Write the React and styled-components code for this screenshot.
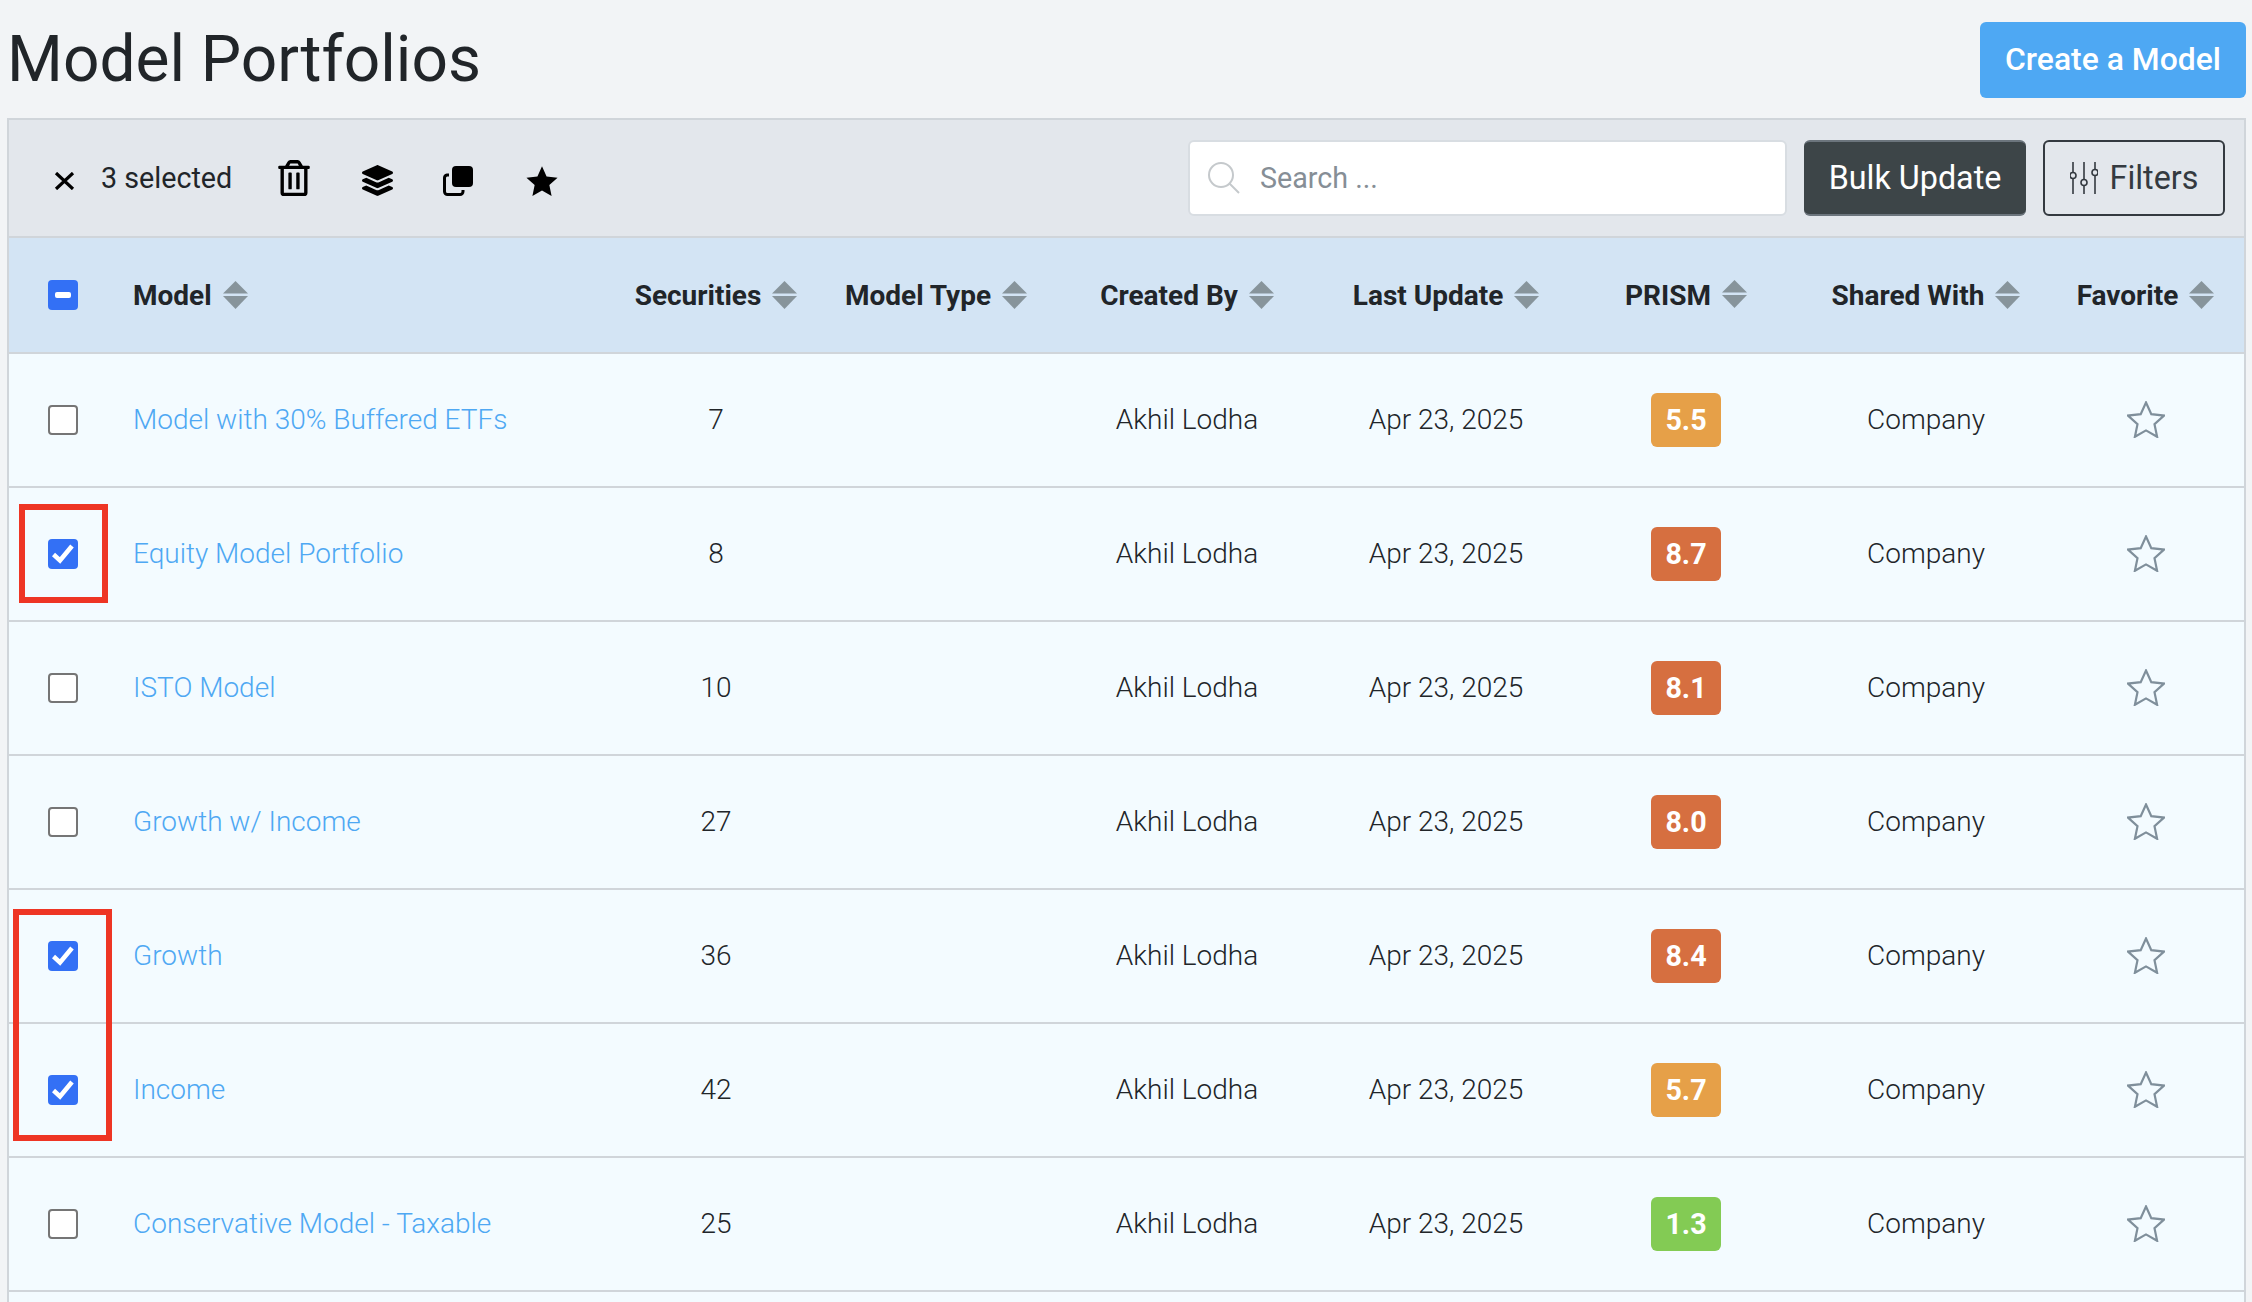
import React from 'react';
import styled, { createGlobalStyle } from 'styled-components';
import { FaRegTrashAlt, FaLayerGroup } from 'react-icons/fa';

const COLUMNS = '107px 493px 214px 226px 276px 242px 238px 242px 197px';
const STAR_POINTS = '19,1.5 24.3,13.2 37,14.6 27.5,23.2 30.1,35.8 19,29.4 7.9,35.8 10.5,23.2 1,14.6 13.7,13.2';

const GlobalStyle = createGlobalStyle`
  html, body {
    margin: 0;
    height: 100%;
    overflow: hidden;
    background: #f2f4f6;
  }
  body {
    font-family: Roboto, "Liberation Sans", sans-serif;
    color: #212529;
  }
`;

const Page = styled.div`
  position: relative;
  width: 2252px;
  height: 1302px;
  overflow: hidden;
  padding: 22px 6px 0 7px;
  box-sizing: border-box;
`;

const PageHeader = styled.header`
  display: flex;
  justify-content: space-between;
  align-items: flex-start;
  height: 96px;
`;

const Title = styled.h1`
  margin: 2px 0 0;
  font-size: 64px;
  font-weight: 400;
  line-height: 72px;
`;

const CreateButton = styled.button`
  width: 266px;
  height: 76px;
  padding: 0 0 2px;
  border: none;
  border-radius: 6px;
  background: #4ea8f3;
  color: #fff;
  font: 500 31.9px Roboto, sans-serif;
`;

const Panel = styled.section`
  border: solid #d0d5da;
  border-width: 2px 2px 0;
`;

const Toolbar = styled.div`
  display: flex;
  align-items: center;
  justify-content: space-between;
  height: 116px;
  padding: 0 19px 0 45px;
  background: #e3e7ec;
  border-bottom: 2px solid #d0d5da;
`;

const Selection = styled.div`
  display: flex;
  align-items: center;
`;

const SelectedCount = styled.span`
  margin: 0 44px 0 26px;
  font-size: 28.7px;
  font-weight: 400;
`;

const Actions = styled.div`
  display: flex;
  align-items: center;
  gap: 50px;
`;

const ActionIcon = styled.span`
  display: flex;
  margin-top: ${(p) => p.$shift || 0}px;
  margin-left: ${(p) => p.$push || 0}px;
  color: #000;
`;

const Controls = styled.div`
  display: flex;
  gap: 17px;
`;

const SearchBox = styled.label`
  display: flex;
  align-items: center;
  gap: 18px;
  width: 599px;
  height: 76px;
  padding-left: 18px;
  box-sizing: border-box;
  background: #fff;
  border: 2px solid #d8dde2;
  border-radius: 6px;
`;

const SearchInput = styled.input`
  flex: 1;
  min-width: 0;
  border: none;
  outline: none;
  background: none;
  font: 400 28.7px Roboto, sans-serif;
  &::placeholder {
    color: #868e96;
    opacity: 1;
  }
`;

const BulkButton = styled.button`
  width: 222px;
  height: 76px;
  background: #3d4548;
  border: none;
  border-top: 2px solid #6c757d;
  border-bottom: 2px solid #6c757d;
  border-radius: 6px;
  color: #fff;
  font: 400 32.3px Roboto, sans-serif;
`;

const FilterButton = styled.button`
  display: flex;
  align-items: center;
  justify-content: center;
  gap: 12px;
  width: 182px;
  height: 76px;
  padding: 0;
  background: transparent;
  border: 2px solid #343a40;
  border-radius: 6px;
  color: #343a40;
  font: 400 32.3px Roboto, sans-serif;
`;

const HeaderRow = styled.div`
  display: grid;
  grid-template-columns: ${COLUMNS};
  align-items: center;
  height: 114px;
  background: #d3e4f4;
  border-bottom: 2px solid #d0d5da;
  font-size: 28px;
  font-weight: 700;
`;

const Row = styled.div`
  display: grid;
  grid-template-columns: ${COLUMNS};
  align-items: center;
  height: 132px;
  background: #f3fbff;
  border-bottom: 2px solid #d0d5da;
  font-size: 28px;
  font-weight: 300;
`;

const Cell = styled.div`
  display: flex;
  align-items: center;
  justify-content: ${(p) => (p.$left ? 'flex-start' : 'center')};
  padding-left: ${(p) => (p.$left ? '17px' : '0')};
  padding-bottom: ${(p) => p.$lift || 0}px;
`;

const Box = styled.span`
  display: flex;
  align-items: center;
  justify-content: center;
  width: 30px;
  height: 30px;
  box-sizing: border-box;
  border-radius: 4px;
  background: ${(p) => (p.$on ? '#3370f5' : '#fff')};
  border: ${(p) => (p.$on ? 'none' : '2px solid #757575')};
`;

const SortLabel = styled.span`
  display: inline-flex;
  align-items: center;
  gap: 11px;
`;

const SortArrows = styled.svg`
  width: 25px;
  height: 28px;
  margin-bottom: ${(p) => (p.$raised ? '3px' : '0')};
  fill: #87949b;
`;

const ModelLink = styled.a`
  color: #4ea8f3;
  text-decoration: none;
`;

const Score = styled.span`
  display: flex;
  align-items: center;
  justify-content: center;
  width: 70px;
  height: 54px;
  border-radius: 6px;
  background: ${(p) => p.$color};
  color: #fff;
  font-size: 28.7px;
  font-weight: 700;
`;

const Annotation = styled.div`
  position: absolute;
  left: ${(p) => p.$left}px;
  top: ${(p) => p.$top}px;
  width: ${(p) => p.$width}px;
  height: ${(p) => p.$height}px;
  box-sizing: border-box;
  border: 6px solid #ee3524;
`;

const scoreColor = (score) => {
  if (score >= 8) return '#d66f40';
  if (score >= 4) return '#e6a048';
  return '#83cb54';
};

const MODELS = [
  { name: 'Model with 30% Buffered ETFs', securities: 7, prism: '5.5' },
  { name: 'Equity Model Portfolio', securities: 8, prism: '8.7', selected: true },
  { name: 'ISTO Model', securities: 10, prism: '8.1' },
  { name: 'Growth w/ Income', securities: 27, prism: '8.0' },
  { name: 'Growth', securities: 36, prism: '8.4', selected: true },
  { name: 'Income', securities: 42, prism: '5.7', selected: true },
  { name: 'Conservative Model - Taxable', securities: 25, prism: '1.3' },
];

function Sort({ raised }) {
  return (
    <SortArrows viewBox="0 0 25 28" $raised={raised}>
      <polygon points="12.5,0 25,12.5 0,12.5" />
      <polygon points="0,15 25,15 12.5,28" />
    </SortArrows>
  );
}

function Heading({ children, raised }) {
  return (
    <Cell>
      <SortLabel>
        {children}
        <Sort raised={raised} />
      </SortLabel>
    </Cell>
  );
}

function Check({ on }) {
  return (
    <Box $on={on}>
      {on && (
        <svg width="22" height="20" viewBox="0 0 22 20" fill="none" stroke="#fff" strokeWidth="4.6">
          <path d="M1.5 10.5 L8 16.5 L20 2" />
        </svg>
      )}
    </Box>
  );
}

function App() {
  return (
    <Page>
      <GlobalStyle />
      <PageHeader>
        <Title>Model Portfolios</Title>
        <CreateButton>Create a Model</CreateButton>
      </PageHeader>
      <Panel>
        <Toolbar>
          <Selection>
            <ActionIcon $shift={6}>
              <svg width="21" height="18" viewBox="0 0 21 18" fill="none" stroke="#000" strokeWidth="3.2">
                <path d="M2 1 L19 17 M19 1 L2 17" />
              </svg>
            </ActionIcon>
            <SelectedCount>3 selected</SelectedCount>
            <Actions>
              <ActionIcon>
                <FaRegTrashAlt size={36} />
              </ActionIcon>
              <ActionIcon $shift={5}>
                <FaLayerGroup size={31} />
              </ActionIcon>
              <ActionIcon $shift={5}>
                <svg width="30" height="30" viewBox="0 0 30 30">
                  <rect x="9" y="0" width="21" height="21" rx="4" fill="#000" />
                  <path d="M6 9 H4 A3 3 0 0 0 1.5 12 V25.5 A3 3 0 0 0 4.5 28.5 H17 A3 3 0 0 0 20 25.5 V24" fill="none" stroke="#000" strokeWidth="3" />
                </svg>
              </ActionIcon>
              <ActionIcon $shift={5} $push={2}>
                <svg width="34" height="32" viewBox="0 0 38 37">
                  <polygon points={STAR_POINTS} fill="#000" />
                </svg>
              </ActionIcon>
            </Actions>
          </Selection>
          <Controls>
            <SearchBox>
              <svg width="32" height="32" viewBox="0 0 32 32" fill="none" stroke="#c5c9cc" strokeWidth="2">
                <circle cx="13" cy="13" r="12" />
                <path d="M21.5 21.5 L31 31" />
              </svg>
              <SearchInput placeholder="Search ..." />
            </SearchBox>
            <BulkButton>Bulk Update</BulkButton>
            <FilterButton>
              <svg width="28" height="32" viewBox="0 0 28 32" fill="none" stroke="#343a40" strokeWidth="1.6">
                <path d="M3 0 V10 M3 17 V32 M14 0 V17 M14 24 V32 M25 0 V7 M25 14 V32" />
                <circle cx="3" cy="13.5" r="3" />
                <circle cx="14" cy="20.5" r="3" />
                <circle cx="25" cy="10.5" r="3" />
              </svg>
              Filters
            </FilterButton>
          </Controls>
        </Toolbar>
        <HeaderRow>
          <Cell>
            <Box $on>
              <svg width="16" height="6" viewBox="0 0 16 6">
                <rect width="16" height="6" rx="2" fill="#fff" />
              </svg>
            </Box>
          </Cell>
          <Cell $left>
            <SortLabel>
              Model
              <Sort />
            </SortLabel>
          </Cell>
          <Heading>Securities</Heading>
          <Heading>Model Type</Heading>
          <Heading>Created By</Heading>
          <Heading>Last Update</Heading>
          <Heading raised>PRISM</Heading>
          <Heading>Shared With</Heading>
          <Heading>Favorite</Heading>
        </HeaderRow>
        {MODELS.map((model) => (
          <Row key={model.name}>
            <Cell>
              <Check on={model.selected} />
            </Cell>
            <Cell $left $lift={2}>
              <ModelLink href="#">{model.name}</ModelLink>
            </Cell>
            <Cell $lift={2}>{model.securities}</Cell>
            <Cell />
            <Cell $lift={2}>Akhil Lodha</Cell>
            <Cell $lift={2}>Apr 23, 2025</Cell>
            <Cell>
              <Score $color={scoreColor(Number(model.prism))}>{model.prism}</Score>
            </Cell>
            <Cell $lift={2}>Company</Cell>
            <Cell $lift={2}>
              <svg width="38" height="37" viewBox="0 0 38 37" fill="none" stroke="#7f8f9b" strokeWidth="2.2">
                <polygon points={STAR_POINTS} />
              </svg>
            </Cell>
          </Row>
        ))}
        <Row />
      </Panel>
      <Annotation $left={19} $top={504} $width={89} $height={99} />
      <Annotation $left={13} $top={909} $width={99} $height={232} />
    </Page>
  );
}

export default App;
